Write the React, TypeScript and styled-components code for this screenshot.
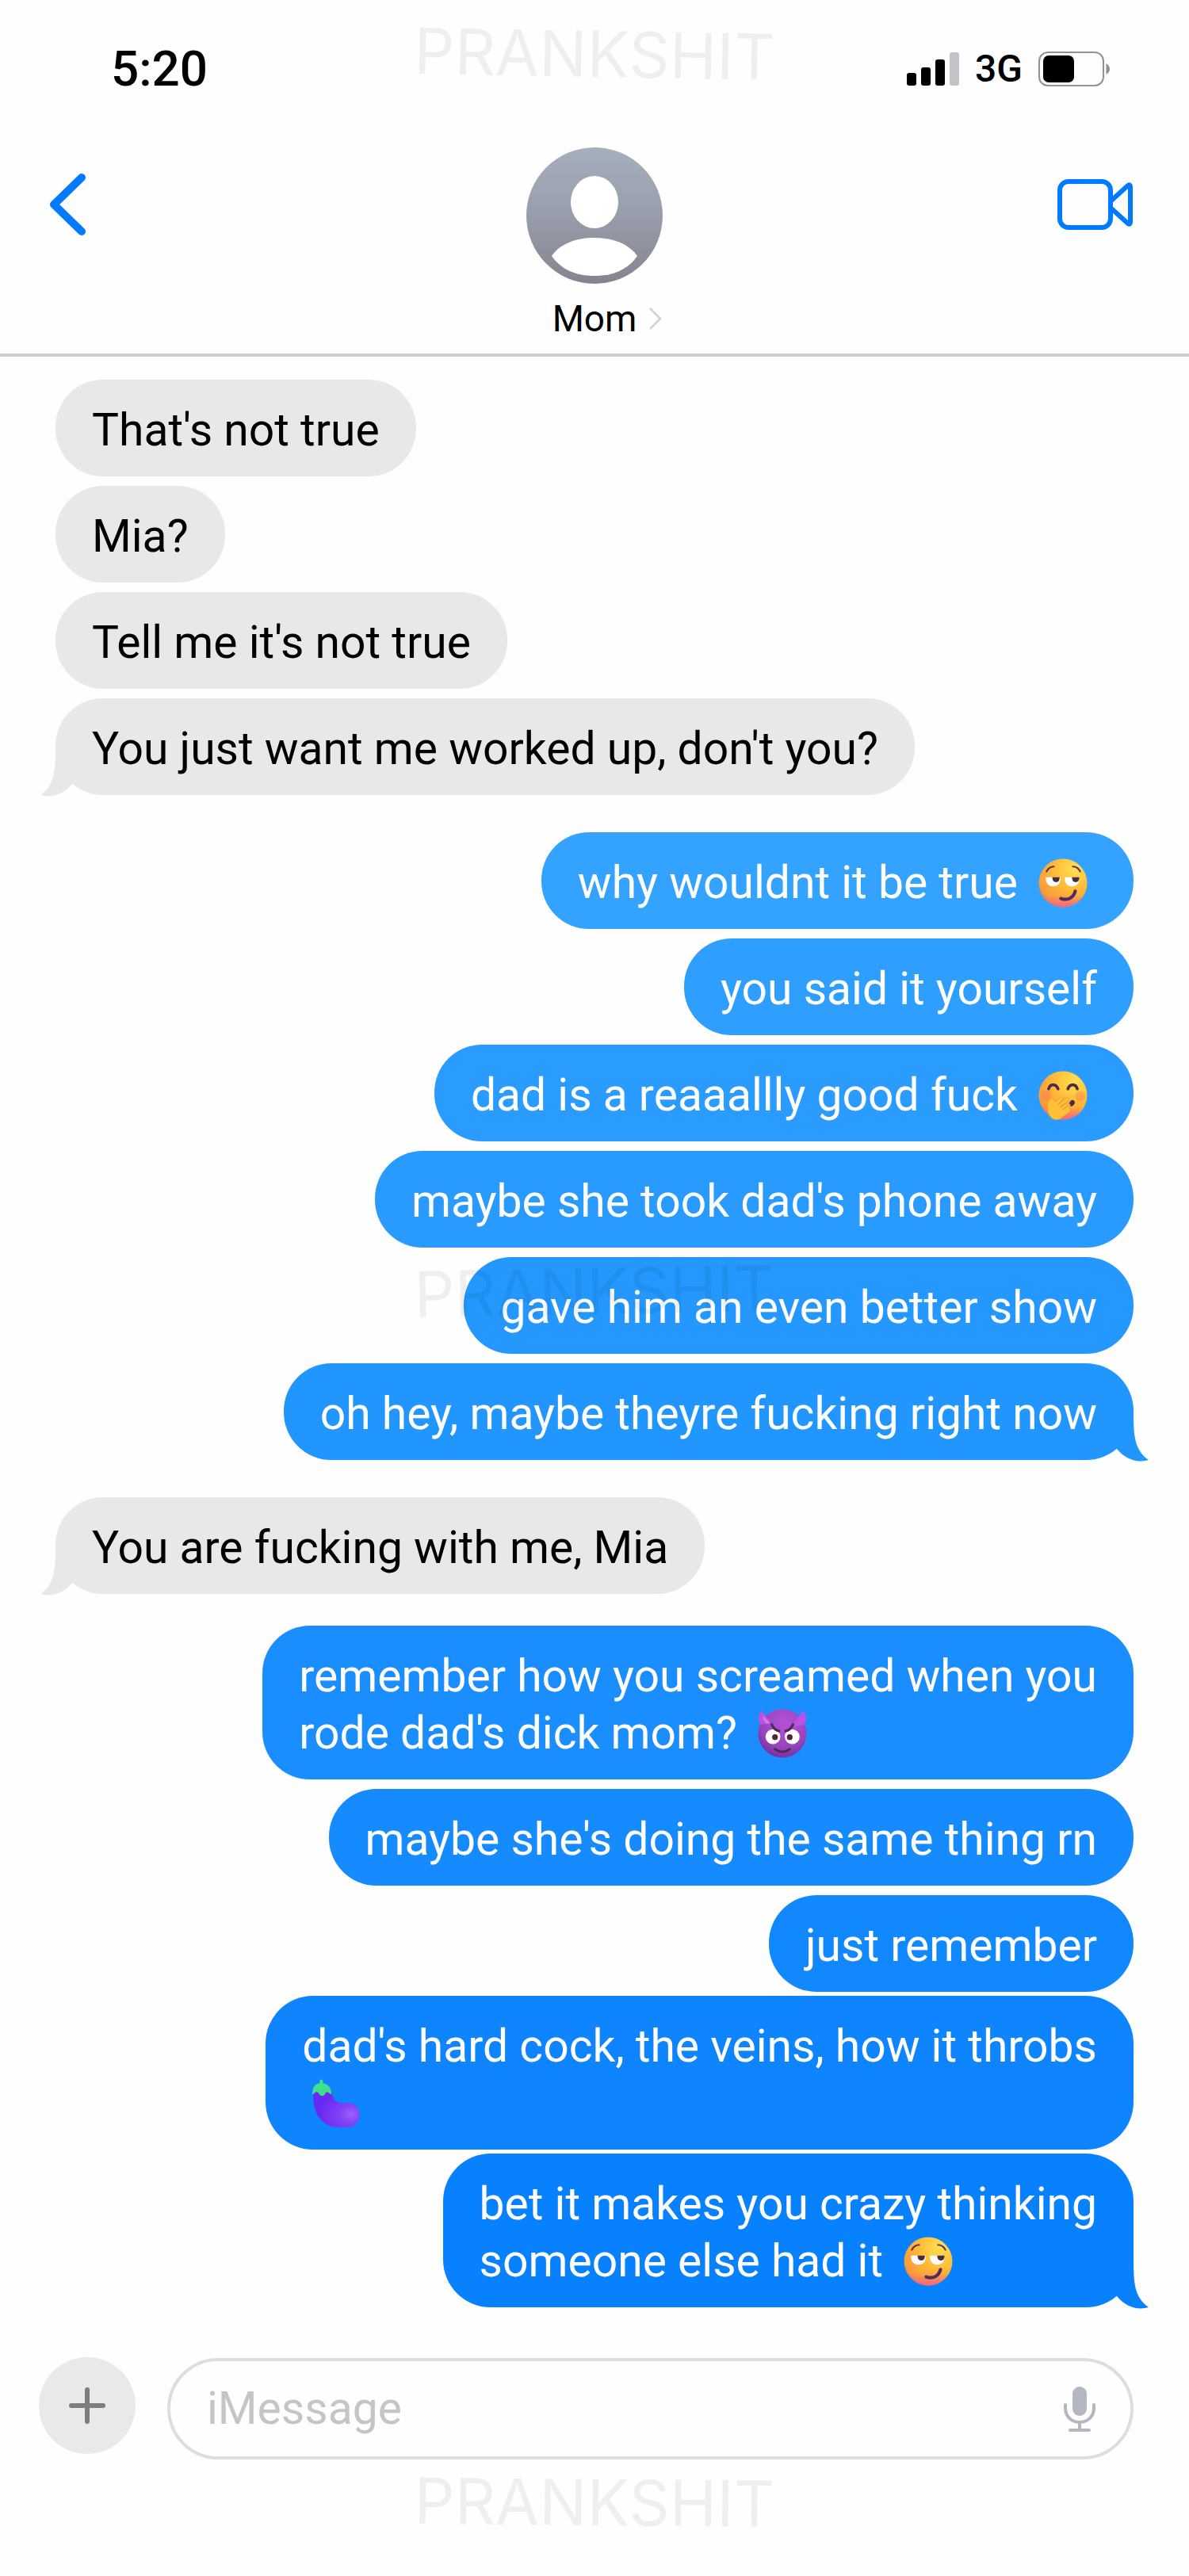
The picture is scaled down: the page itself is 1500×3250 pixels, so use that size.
import React from "react";
import styled, { createGlobalStyle } from "styled-components";

const GlobalStyle = createGlobalStyle`
  *, *::before, *::after { box-sizing: border-box; }
  body {
    margin: 0;
    background: #fefefe;
    color: #000;
    font-family: Roboto, "Liberation Sans", sans-serif;
  }
  button { font: inherit; color: inherit; background: none; border: 0; padding: 0; cursor: pointer; }
  svg { display: block; flex: none; }
`;

const Screen = styled.div`
  position: relative;
  display: flex;
  flex-direction: column;
  overflow: hidden;
`;

const Header = styled.header`
  display: flex;
  flex-direction: column;
  border-bottom: 4px solid #ccc;
`;

const StatusBar = styled.div`
  display: flex;
  align-items: center;
  justify-content: space-between;
  height: 174px;
  padding: 0 100px 0 140px;
`;

const Clock = styled.time`
  font-size: 62px;
  line-height: 72px;
  font-weight: 500;
`;

const StatusIcons = styled.div`
  display: flex;
  align-items: center;
  gap: 20px;
  font-size: 48px;
  line-height: 56px;
  font-weight: 500;
`;

const NavBar = styled.div`
  display: grid;
  grid-template-columns: 1fr auto 1fr;
  align-items: start;
  padding: 12px 60px 16px;
`;

const BackButton = styled.button`
  justify-self: start;
  margin-top: 32px;
`;

const VideoButton = styled.button`
  justify-self: end;
  margin-top: 38px;
  margin-right: 10px;
`;

const Contact = styled.button`
  display: flex;
  flex-direction: column;
  align-items: center;
  gap: 16px;
`;

const ContactName = styled.span`
  display: flex;
  align-items: center;
  gap: 16px;
  padding-left: 32px;
  font-size: 46px;
  line-height: 56px;
`;

const Thread = styled.main`
  display: flex;
  flex-direction: column;
  gap: 47px;
  padding: 29px 70px 63px;
`;

const Group = styled.section<{ $mine: boolean }>`
  display: flex;
  flex-direction: column;
  align-items: ${(p) => (p.$mine ? "flex-end" : "flex-start")};
  gap: 12px;
`;

const Bubble = styled.div<{ $mine: boolean; $fill: string; $tall: boolean }>`
  position: relative;
  padding: 28px 46px 22px;
  margin-top: ${(p) => (p.$tall ? "-7px" : "0")};
  border-radius: 60px;
  background: ${(p) => p.$fill};
  color: ${(p) => (p.$mine ? "#fff" : "#000")};
  font-size: 57px;
  line-height: 72px;
`;

const Line = styled.p`
  display: flex;
  align-items: center;
  height: 72px;
  margin: 0;
  white-space: pre;
`;

const TailShape = styled.svg<{ $mine: boolean }>`
  position: absolute;
  bottom: -2px;
  ${(p) => (p.$mine ? "right: -20px;" : "left: -20px; transform: scaleX(-1);")}
`;

const EmojiShape = styled.svg`
  width: 62px;
  height: 62px;
  margin: 0 12px;
`;

const Composer = styled.form`
  display: flex;
  align-items: center;
  gap: 40px;
  padding: 0 70px 0 49px;
`;

const AddButton = styled.button`
  flex: none;
  display: flex;
  align-items: center;
  justify-content: center;
  width: 122px;
  height: 122px;
  margin-bottom: 8px;
  border-radius: 50%;
  background: #e8e9eb;
`;

const Field = styled.label`
  flex: 1;
  display: flex;
  align-items: center;
  height: 128px;
  padding: 0 44px 0 46px;
  border: 4px solid #ddd;
  border-radius: 64px;
`;

const MessageInput = styled.input`
  flex: 1;
  min-width: 0;
  height: 72px;
  padding: 0;
  border: 0;
  outline: 0;
  background: none;
  font: 57px/72px Roboto, "Liberation Sans", sans-serif;
  &::placeholder { color: #c5c5c7; opacity: 1; }
`;

const Footer = styled.footer`
  height: 147px;
`;

const Watermark = styled.span<{ $top: number; $angle: number }>`
  position: absolute;
  left: 0;
  right: 0;
  top: ${(p) => p.$top}px;
  text-align: center;
  font-family: Inter, "Liberation Sans", sans-serif;
  font-size: 80px;
  line-height: 96px;
  font-weight: 400;
  color: rgba(0, 0, 0, 0.06);
  transform: rotate(${(p) => p.$angle}deg);
  pointer-events: none;
`;

type EmojiName = "smirk" | "giggle" | "devil" | "aubergine";

const FaceGradients = ({ id }: { id: string }) => (
  <defs>
    <radialGradient id={`${id}-face`} cx="0.75" cy="0.2" r="0.95">
      <stop offset="0" stopColor="#ffe04f" />
      <stop offset="0.5" stopColor="#ffb837" />
      <stop offset="0.85" stopColor="#f99a3c" />
      <stop offset="1" stopColor="#e8784a" />
    </radialGradient>
    <linearGradient id={`${id}-chin`} x1="0" y1="0" x2="0" y2="1">
      <stop offset="0.75" stopColor="#f45f8c" stopOpacity="0" />
      <stop offset="1" stopColor="#f45f8c" stopOpacity="0.9" />
    </linearGradient>
  </defs>
);

function Emoji({ name }: { name: EmojiName }) {
  const id = React.useId();
  if (name === "smirk") {
    return (
      <EmojiShape viewBox="0 0 60 60" role="img" aria-label="smirking face">
        <FaceGradients id={id} />
        <circle cx="30" cy="30" r="29.5" fill={`url(#${id}-face)`} />
        <circle cx="30" cy="30" r="29.5" fill={`url(#${id}-chin)`} />
        <path d="M10 16Q13 10 19 10M42 10Q48 10 51 16" fill="none" stroke="#59304f" strokeWidth="2" strokeLinecap="round" />
        <path d="M9 23H27Q27 34 18 34T9 23ZM32 23H50Q50 34 41 34T32 23Z" fill="#fff" />
        <path d="M17 23H26Q26 29 21.500 29T17 23ZM41 23H50Q50 29 45.500 29T41 23Z" fill="#4b2c3d" />
        <path d="M27.500 49C36 52 43 48 45 40" fill="none" stroke="#512a5e" strokeWidth="4" strokeLinecap="round" />
      </EmojiShape>
    );
  }
  if (name === "giggle") {
    return (
      <EmojiShape viewBox="0 0 60 60" role="img" aria-label="face with hand over mouth">
        <FaceGradients id={id} />
        <circle cx="30" cy="30" r="29.500" fill={`url(#${id}-face)`} />
        <circle cx="30" cy="30" r="29.500" fill={`url(#${id}-chin)`} />
        <circle cx="10" cy="30" r="6" fill="#ff6a5c" opacity="0.35" />
        <circle cx="51" cy="31" r="6" fill="#ff6a5c" opacity="0.35" />
        <path d="M12.500 22Q14 17 18 17T24 22M36 22Q38 17 42 17T47.500 22" fill="none" stroke="#4b2c45" strokeWidth="3.500" strokeLinecap="round" />
        <ellipse cx="41" cy="39.500" rx="3" ry="4" transform="rotate(35 41 39.500)" fill="#4b2c45" />
        <path d="M12 39L14 35Q17 31 19 35L20 38L28 32Q31 31 31 34L29 36L34 33Q38 33 37 36L34 40L37 40Q40 41 38 44L38 47Q40 49 37 51L29 57Q23 62 17 58Q11 54 11 45Z" fill="#ffc038" stroke="#ea953b" strokeWidth="0.800" />
        <path d="M24 41L30 36M27 44L34 39M30 47L37 42" stroke="#e98f31" strokeWidth="1" strokeLinecap="round" />
      </EmojiShape>
    );
  }
  if (name === "devil") {
    return (
      <EmojiShape viewBox="0 0 60 60" role="img" aria-label="smiling face with horns">
        <defs>
          <radialGradient id={id} cx="0.55" cy="0.3" r="0.7">
            <stop offset="0" stopColor="#b452d8" />
            <stop offset="0.7" stopColor="#9844bd" />
            <stop offset="1" stopColor="#7630a2" />
          </radialGradient>
        </defs>
        <circle cx="30" cy="30" r="29.500" fill={`url(#${id})`} />
        <path d="M5 2C0 9 0 14 3 19L15 18C15 11 7 9 5 2ZM55 2C60 9 60 14 57 19L45 22C43 12 53 9 55 2Z" fill="#ba52e2" />
        <path d="M6 8C9 13 14 15 15 18L10 18C8 15 6 12 6 8Z" fill="#d979eb" />
        <circle cx="18.500" cy="34" r="9" fill="#fff" />
        <circle cx="42" cy="34" r="9" fill="#fff" />
        <circle cx="21" cy="34.500" r="3.500" fill="#4e2735" />
        <circle cx="39" cy="34.500" r="3.500" fill="#4e2735" />
        <path d="M17 19Q20 26 26 27M43 19Q40 26 34 27M21 49Q30 56 39 49" fill="none" stroke="#4d2b56" strokeWidth="3" strokeLinecap="round" />
      </EmojiShape>
    );
  }
  return (
    <EmojiShape viewBox="0 0 60 60" role="img" aria-label="aubergine">
      <defs>
        <radialGradient id={id} cx="0.82" cy="0.63" r="0.7">
          <stop offset="0" stopColor="#a15fff" />
          <stop offset="0.35" stopColor="#8143f5" />
          <stop offset="1" stopColor="#6729f4" />
        </radialGradient>
      </defs>
      <path d="M2 15C1 40 10 59 35 59H43C64 59 63 29 45 29C34 30 26 29 24 15Z" fill={`url(#${id})`} />
      <path d="M1 19C1 10 4 6 10 5V2Q12 -1 14 2V5C21 6 25 12 24 19L20 16Q17 16 16 19Q13 22 10 19Q8 15 5 16Z" fill="#3fe18a" />
    </EmojiShape>
  );
}

function Tail({ mine, fill }: { mine: boolean; fill: string }) {
  return (
    <TailShape $mine={mine} width="56" height="64" viewBox="0 0 56 64" aria-hidden="true">
      <path d="M36 0C36 32 37 49 55 62C41 66 27 62 15 48C20 30 25 12 36 0Z" fill={fill} />
    </TailShape>
  );
}

interface Message {
  lines: string[];
  emoji?: EmojiName;
  fill: string;
}

const GREY = "#e8e8ea";

const groups: { mine: boolean; messages: Message[] }[] = [
  {
    mine: false,
    messages: [
      { lines: ["That's not true"], fill: GREY },
      { lines: ["Mia?"], fill: GREY },
      { lines: ["Tell me it's not true"], fill: GREY },
      { lines: ["You just want me worked up, don't you?"], fill: GREY },
    ],
  },
  {
    mine: true,
    messages: [
      { lines: ["why wouldnt it be true "], emoji: "smirk", fill: "#33a3ff" },
      { lines: ["you said it yourself"], fill: "#2f9fff" },
      { lines: ["dad is a reaaallly good fuck "], emoji: "giggle", fill: "#2b9cff" },
      { lines: ["maybe she took dad's phone away"], fill: "#299aff" },
      { lines: ["gave him an even better show"], fill: "#2498ff" },
      { lines: ["oh hey, maybe theyre fucking right now"], fill: "#2196ff" },
    ],
  },
  { mine: false, messages: [{ lines: ["You are fucking with me, Mia"], fill: GREY }] },
  {
    mine: true,
    messages: [
      { lines: ["remember how you screamed when you", "rode dad's dick mom? "], emoji: "devil", fill: "#1a8dff" },
      { lines: ["maybe she's doing the same thing rn"], fill: "#168aff" },
      { lines: ["just remember"], fill: "#1288ff" },
      { lines: ["dad's hard cock, the veins, how it throbs", ""], emoji: "aubergine", fill: "#0e85ff" },
      { lines: ["bet it makes you crazy thinking", "someone else had it "], emoji: "smirk", fill: "#0881ff" },
    ],
  },
];

export default function App() {
  return (
    <>
      <GlobalStyle />
      <Screen>
        <Header>
          <StatusBar>
            <Clock>5:20</Clock>
            <StatusIcons>
              <svg width="66" height="44" viewBox="0 0 66 44" aria-label="Signal">
                <rect x="0" y="27" width="12" height="16" rx="3" />
                <rect x="18" y="20" width="12" height="23" rx="3" />
                <rect x="36" y="10" width="12" height="33" rx="3" />
                <rect x="54" y="1" width="12" height="42" rx="3" fill="#c3c2c9" />
              </svg>
              <span>3G</span>
              <svg width="90" height="44" viewBox="0 0 90 44" aria-label="Battery">
                <rect x="1" y="1" width="81" height="42" rx="11" fill="none" stroke="#929292" strokeWidth="2" />
                <rect x="6" y="5" width="39" height="34" rx="7" />
                <path d="M85.500 15Q90 18 90 22T85.500 29Z" fill="#929292" />
              </svg>
            </StatusIcons>
          </StatusBar>
          <NavBar>
            <BackButton type="button" aria-label="Back">
              <svg width="52" height="80" viewBox="0 0 52 80" fill="none" stroke="#007aff" strokeWidth="10" strokeLinecap="round" strokeLinejoin="round">
                <path d="M43 6L8 40L43 74" />
              </svg>
            </BackButton>
            <Contact type="button">
              <svg width="172" height="172" viewBox="0 0 172 172" aria-hidden="true">
                <defs>
                  <linearGradient id="avatar" x1="0" y1="0" x2="0" y2="1">
                    <stop offset="0" stopColor="#a5afbd" />
                    <stop offset="0.5" stopColor="#989dab" />
                    <stop offset="1" stopColor="#84848f" />
                  </linearGradient>
                </defs>
                <circle cx="86" cy="86" r="86" fill="url(#avatar)" />
                <ellipse cx="86" cy="69" rx="30" ry="33" fill="#fff" />
                <path d="M32 137C42 122 62 114 86 114S130 122 140 137C128 154 110 162 86 162S44 154 32 137Z" fill="#fff" />
              </svg>
              <ContactName>
                Mom
                <svg width="16" height="28" viewBox="0 0 16 28" fill="none" stroke="#d2d2d4" strokeWidth="2.500">
                  <path d="M1 1L14 14L1 27" />
                </svg>
              </ContactName>
            </Contact>
            <VideoButton type="button" aria-label="Video call">
              <svg width="96" height="68" viewBox="0 0 96 68" fill="none" stroke="#007aff" strokeWidth="6" strokeLinejoin="round">
                <rect x="3" y="5" width="64" height="58" rx="11" />
                <path d="M68 29L89 10Q92 8 92 12V56Q92 60 89 58L68 39" />
              </svg>
            </VideoButton>
          </NavBar>
        </Header>
        <Thread>
          {groups.map((group, g) => (
            <Group key={g} $mine={group.mine}>
              {group.messages.map((message, i) => (
                <Bubble key={i} $mine={group.mine} $fill={message.fill} $tall={message.lines.length > 1}>
                  {i === group.messages.length - 1 && <Tail mine={group.mine} fill={message.fill} />}
                  {message.lines.map((line, n) => (
                    <Line key={n}>
                      {line}
                      {message.emoji && n === message.lines.length - 1 && <Emoji name={message.emoji} />}
                    </Line>
                  ))}
                </Bubble>
              ))}
            </Group>
          ))}
        </Thread>
        <Composer onSubmit={(e) => e.preventDefault()}>
          <AddButton type="button" aria-label="Add attachment">
            <svg width="46" height="46" viewBox="0 0 46 46" stroke="#7d7e80" strokeWidth="6" strokeLinecap="round">
              <path d="M23 3V43M3 23H43" />
            </svg>
          </AddButton>
          <Field>
            <MessageInput type="text" placeholder="iMessage" aria-label="Message" />
            <svg width="40" height="60" viewBox="0 0 40 60" fill="none" stroke="#b3b7c1" strokeWidth="4" strokeLinecap="round">
              <rect x="11" y="2" width="18" height="37" rx="9" fill="#b3b7c1" stroke="none" />
              <path d="M2 25V29C2 40 10 47 20 47S38 40 38 29V25M20 47V56M8 57H32" />
            </svg>
          </Field>
        </Composer>
        <Footer />
        <Watermark $top={20} $angle={1}>PRANKSHIT</Watermark>
        <Watermark $top={1581} $angle={-1}>PRANKSHIT</Watermark>
        <Watermark $top={3109} $angle={0.5}>PRANKSHIT</Watermark>
      </Screen>
    </>
  );
}
